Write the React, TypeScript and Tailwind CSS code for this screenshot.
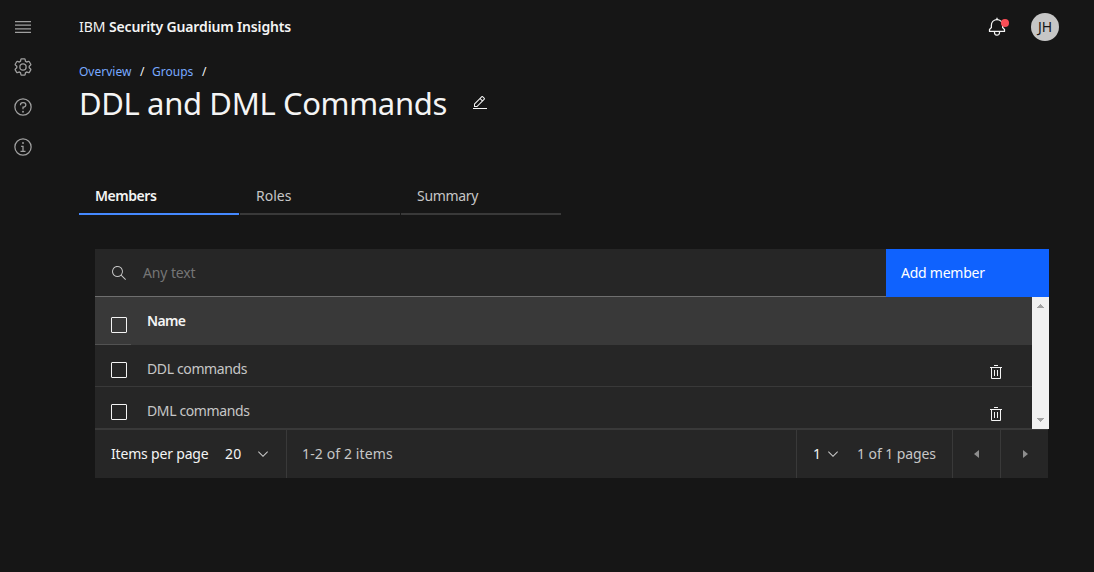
import type { ReactNode } from "react";

function Icon({ size = 16, box = 32, className = "", children }: { size?: number; box?: number; className?: string; children: ReactNode }) {
  return (
    <svg width={size} height={size} viewBox={`0 0 ${box} ${box}`} fill="currentColor" className={`shrink-0 ${className}`} aria-hidden="true">
      {children}
    </svg>
  );
}

const ring = "M16,2A14,14,0,1,0,30,16,14,14,0,0,0,16,2Zm0,26A12,12,0,1,1,28,16,12,12,0,0,1,16,28Z";

function Chevron() {
  return (
    <Icon box={16} className="text-[#c6c6c6]">
      <path d="M8 11L3 6 3.7 5.3 8 9.6 12.3 5.3 13 6z" />
    </Icon>
  );
}

function Trash() {
  return (
    <Icon className="text-[#f4f4f4]">
      <path d="M12 12H14V24H12zM18 12H20V24H18zM4 6V8H6V28a2 2 0 0 0 2 2H24a2 2 0 0 0 2-2V8h2V6zM8 28V8H24V28zM12 2H20V4H12z" />
    </Icon>
  );
}

function Checkbox({ className }: { className: string }) {
  return <span role="checkbox" aria-checked="false" className={`size-4 shrink-0 rounded-[1px] border border-[#f4f4f4] ${className}`} />;
}

function Sidebar() {
  return (
    <nav className="flex w-[46px] shrink-0 flex-col items-center gap-5 pt-[17px] text-[#a0a0a0]">
      <Icon size={20} box={20}>
        <path d="M2 14.8H18V16H2zM2 11.2H18V12.4H2zM2 7.6H18V8.8H2zM2 4H18V5.2H2z" />
      </Icon>
      <Icon size={20}>
        <path d="M27,16.76c0-.25,0-.5,0-.76s0-.51,0-.77l1.92-1.68A2,2,0,0,0,29.3,11L26.94,7a2,2,0,0,0-1.73-1,2,2,0,0,0-.64.1l-2.43.82a11.35,11.35,0,0,0-1.31-.75l-.51-2.52a2,2,0,0,0-2-1.61H13.64a2,2,0,0,0-2,1.61l-.51,2.52a11.48,11.48,0,0,0-1.32.75L7.43,6.06A2,2,0,0,0,6.79,6,2,2,0,0,0,5.06,7L2.7,11a2,2,0,0,0,.41,2.51L5,15.24c0,.25,0,.5,0,.76s0,.51,0,.77L3.11,18.45A2,2,0,0,0,2.7,21L5.06,25a2,2,0,0,0,1.73,1,2,2,0,0,0,.64-.1l2.43-.82a11.35,11.35,0,0,0,1.31.75l.51,2.52a2,2,0,0,0,2,1.61h4.72a2,2,0,0,0,2-1.61l.51-2.52a11.48,11.48,0,0,0,1.32-.75l2.42.82a2,2,0,0,0,.64.1,2,2,0,0,0,1.73-1L29.3,21a2,2,0,0,0-.41-2.51ZM25.21,24l-3.43-1.16a8.86,8.86,0,0,1-2.71,1.57L18.36,28H13.64l-.71-3.55a9.36,9.36,0,0,1-2.7-1.57L6.79,24,4.43,20l2.72-2.4a8.9,8.9,0,0,1,0-3.13L4.43,12,6.79,8l3.43,1.16a8.86,8.86,0,0,1,2.71-1.57L13.64,4h4.72l.71,3.55a9.36,9.36,0,0,1,2.7,1.57L25.21,8,27.57,12l-2.72,2.4a8.9,8.9,0,0,1,0,3.13L27.57,20Z" />
        <path d="M16,22a6,6,0,1,1,6-6A5.94,5.94,0,0,1,16,22Zm0-10a3.91,3.91,0,0,0-4,4,3.91,3.91,0,0,0,4,4,3.91,3.91,0,0,0,4-4A3.91,3.91,0,0,0,16,12Z" />
      </Icon>
      <Icon size={20}>
        <path d={ring} />
        <circle cx="16" cy="23.5" r="1.5" />
        <path d="M17,8H15.5A4.49,4.49,0,0,0,11,12.5V13h2v-.5A2.5,2.5,0,0,1,15.5,10H17a2.5,2.5,0,0,1,0,5H15v4.5h2V17a4.5,4.5,0,0,0,0-9Z" />
      </Icon>
      <Icon size={20}>
        <path d={ring} />
        <path d="M17 22V14H13V16H15V22H12V24H20V22zM16,8a1.5,1.5,0,1,0,1.5,1.5A1.5,1.5,0,0,0,16,8Z" />
      </Icon>
    </nav>
  );
}

function Header() {
  return (
    <header className="flex h-[54px] items-center pr-[35px]">
      <div className="flex items-center text-[14px] leading-[18px] text-[#f4f4f4]">
        <span className="w-[30px]">IBM</span>
        <span className="font-semibold tracking-[-0.15px]">Security Guardium Insights</span>
      </div>
      <div className="relative ml-auto size-5 text-[#f4f4f4]">
        <Icon size={20}>
          <path d="M28.7071,19.293,26,16.5859V13a10.0136,10.0136,0,0,0-9-9.9492V1H15V3.0508A10.0136,10.0136,0,0,0,6,13v3.5859L3.2929,19.293A1,1,0,0,0,3,20v3a1,1,0,0,0,1,1h7v.7768a5.152,5.152,0,0,0,4.5,5.1987A5.0057,5.0057,0,0,0,21,25V24h7a1,1,0,0,0,1-1V20A1,1,0,0,0,28.7071,19.293ZM19,25a3,3,0,0,1-6,0V24h6Zm8-3H5V20.4141L7.707,17.707A1,1,0,0,0,8,17V13a8,8,0,0,1,16,0v4a1,1,0,0,0,.293.707L27,20.4141Z" />
        </Icon>
        <span className="absolute top-[2px] left-[14px] size-2 rounded-full bg-[#fa4d56]" />
      </div>
      <div className="ml-6 flex size-7 items-center justify-center rounded-full bg-[#c6c6c6] text-[14px] leading-[18px] text-[#161616]">JH</div>
    </header>
  );
}

const tabs = [
  { label: "Members", style: "border-[#4589ff] font-semibold tracking-[-0.45px] text-[#f4f4f4]" },
  { label: "Roles", style: "border-[#393939] text-[#c6c6c6]" },
  { label: "Summary", style: "border-[#393939] tracking-[-0.3px] text-[#c6c6c6]" },
];
const members = ["DDL commands", "DML commands"];

function MembersTable() {
  return (
    <section className="ml-4 w-[954px] text-[14px] leading-[18px]">
      <div className="flex h-12">
        <div className="flex flex-1 items-center border-b border-[#6f6f6f] bg-[#262626] pl-4 text-[#c6c6c6]">
          <Icon box={16}>
            <path d="M15,14.3L10.7,10c1.9-2.3,1.6-5.8-0.7-7.7S4.2,0.7,2.3,3S0.7,8.8,3,10.7c2,1.7,5,1.7,7,0l4.3,4.3L15,14.3z M2,6.5C2,4,4,2,6.5,2S11,4,11,6.5S9,11,6.5,11S2,9,2,6.5z" />
          </Icon>
          <span className="ml-4 tracking-[-0.12px] text-[#757575]">Any text</span>
        </div>
        <button className="flex w-[163px] items-center bg-[#0f62fe] pl-[15px] tracking-[-0.25px] text-white">Add member</button>
      </div>
      <div className="flex h-[132px]">
        <div className="flex-1 bg-[#262626]">
          <div className="flex h-12 bg-[#393939] font-semibold text-[#f4f4f4]">
            <div className="w-9 border-b border-[#525252] pt-5 pl-4">
              <Checkbox className="block" />
            </div>
            <span className="ml-4 pt-[15px] tracking-[-0.65px]">Name</span>
          </div>
          {members.map((m) => (
            <div key={m} className="flex h-[42px] border-b border-[#393939] pr-7 pl-4 text-[#c6c6c6]">
              <Checkbox className="mt-[17px]" />
              <span className="ml-5 pt-[15px] tracking-[-0.37px]">{m}</span>
              <div className="ml-auto pt-[19px]">
                <Trash />
              </div>
            </div>
          ))}
        </div>
        <div className="flex w-[17px] flex-col items-center justify-between bg-[#f1f1f1] py-[7px] text-[#a3a3a3]">
          <svg width="7" height="4" viewBox="0 0 7 4" fill="currentColor" shapeRendering="crispEdges"><path d="M3 0h1v1h1v1h1v1h1v1H0V3h1V2h1V1h1z" /></svg>
          <svg width="7" height="4" viewBox="0 0 7 4" fill="currentColor" shapeRendering="crispEdges"><path d="M0 0h7v1H6v1H5v1H4v1H3V3H2V2H1V1H0z" /></svg>
        </div>
      </div>
      <div className="flex h-[49px] w-[953px] border-t border-[#393939] bg-[#262626] text-[#c6c6c6]">
        <div className="flex w-48 items-center border-r border-[#393939] pl-4 text-[#f4f4f4]">
          <span className="w-[114px] tracking-[-0.18px]">Items per page</span>
          <span className="w-[30px] tracking-[0.3px]">20</span>
          <Chevron />
        </div>
        <span className="self-center pl-[15px] tracking-[0.12px]">1-2 of 2 items</span>
        <div className="ml-auto flex w-[157px] items-center border-x border-[#393939] pl-4">
          <span className="w-3 text-[#f4f4f4]">1</span>
          <Chevron />
          <span className="ml-4 tracking-[-0.08px]">1 of 1 pages</span>
        </div>
        <div className="flex w-12 items-center justify-center border-r border-[#393939] text-[#8d8d8d]">
          <Icon><path d="M20 24L10 16 20 8z" /></Icon>
        </div>
        <div className="flex w-[47px] items-center justify-center text-[#8d8d8d]">
          <Icon><path d="M12 8L22 16 12 24z" /></Icon>
        </div>
      </div>
    </section>
  );
}

export default function App() {
  return (
    <div className="flex h-[572px] w-[1094px] overflow-hidden bg-[#161616] font-['Noto_Sans','Liberation_Sans',sans-serif] whitespace-nowrap">
      <Sidebar />
      <main className="flex-1 pl-[33px]">
        <Header />
        <div className="flex h-[33px] items-start pt-[10px] text-[12px] leading-4 text-[#78a9ff]">
          <a className="w-[61px]">Overview</a>
          <span className="w-3 text-[#f4f4f4]">/</span>
          <a className="w-[50px]">Groups</a>
          <span className="text-[#f4f4f4]">/</span>
        </div>
        <div className="flex h-[41px] items-start">
          <h1 className="w-[393px] text-[31px] leading-8 tracking-[-0.36px] text-[#f4f4f4]">DDL and DML Commands</h1>
          <Icon className="mt-2 text-[#f4f4f4]">
            <path d="M2,26H30V28H2zM25.4,9c.8-.8.8-2,0-2.8l-3.6-3.6c-.8-.8-2-.8-2.8,0l-15,15V24h6.4L25.4,9zM20.4,4L24,7.6l-3,3L17.4,7L20.4,4zM6,22v-3.6l10-10l3.6,3.6l-10,10H6z" />
          </Icon>
        </div>
        <div className="mt-[52px] mb-[34px] flex h-[35px] gap-px text-[14px] leading-[18px]">
          {tabs.map((t) => (
            <div key={t.label} className={`w-40 border-b-2 pt-[7px] pl-4 ${t.style}`}>
              {t.label}
            </div>
          ))}
        </div>
        <MembersTable />
      </main>
    </div>
  );
}
